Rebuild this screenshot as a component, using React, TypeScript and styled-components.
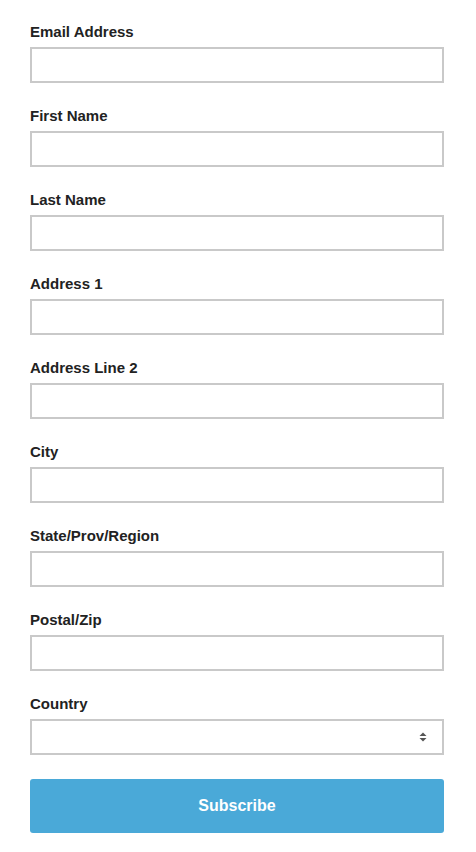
import React from "react";
import styled, { createGlobalStyle } from "styled-components";

const Global = createGlobalStyle`
  html, body { margin: 0; padding: 0; background: #fff; }
  body { font-family: "Liberation Sans", Arial, Helvetica, sans-serif; }
  * { box-sizing: border-box; }
`;

const Form = styled.form`
  display: flex;
  flex-direction: column;
  gap: 24px;
  padding: 23px 32px 0 30px;
  width: 476px;
`;

const Field = styled.div`
  display: flex;
  flex-direction: column;
  gap: 6px;
`;

const Label = styled.label`
  font-size: 15px;
  line-height: 18px;
  font-weight: 700;
  color: #222;
`;

const Input = styled.input`
  display: block;
  width: 414px;
  height: 36px;
  border: 2px solid #c9c9c9;
  border-radius: 0;
  background: #fff;
  padding: 0 8px;
  font-family: inherit;
  font-size: 15px;
  outline: none;
`;

const SelectBox = styled.div`
  position: relative;
  width: 414px;
  height: 36px;
  border: 2px solid #c9c9c9;
  background: #fff;
`;

const Arrows = styled.svg`
  position: absolute;
  right: 15px;
  top: 50%;
  transform: translateY(-50%);
`;

const Button = styled.button`
  width: 414px;
  height: 54px;
  border: none;
  border-radius: 3px;
  background: #4aa9d8;
  color: #fff;
  font-family: inherit;
  font-size: 16px;
  font-weight: 700;
  cursor: pointer;
`;

const fields = [
  "Email Address",
  "First Name",
  "Last Name",
  "Address 1",
  "Address Line 2",
  "City",
  "State/Prov/Region",
  "Postal/Zip",
];

export default function App() {
  return (
    <>
      <Global />
      <Form onSubmit={(e) => e.preventDefault()}>
        {fields.map((f) => (
          <Field key={f}>
            <Label>{f}</Label>
            <Input type="text" />
          </Field>
        ))}
        <Field>
          <Label>Country</Label>
          <SelectBox>
            <Arrows width="8" height="10" viewBox="0 0 8 10">
              <polygon points="4,0.5 7.5,4 0.5,4" fill="#555" />
              <polygon points="0.5,6 7.5,6 4,9.5" fill="#555" />
            </Arrows>
          </SelectBox>
        </Field>
        <Button type="submit">Subscribe</Button>
      </Form>
    </>
  );
}
